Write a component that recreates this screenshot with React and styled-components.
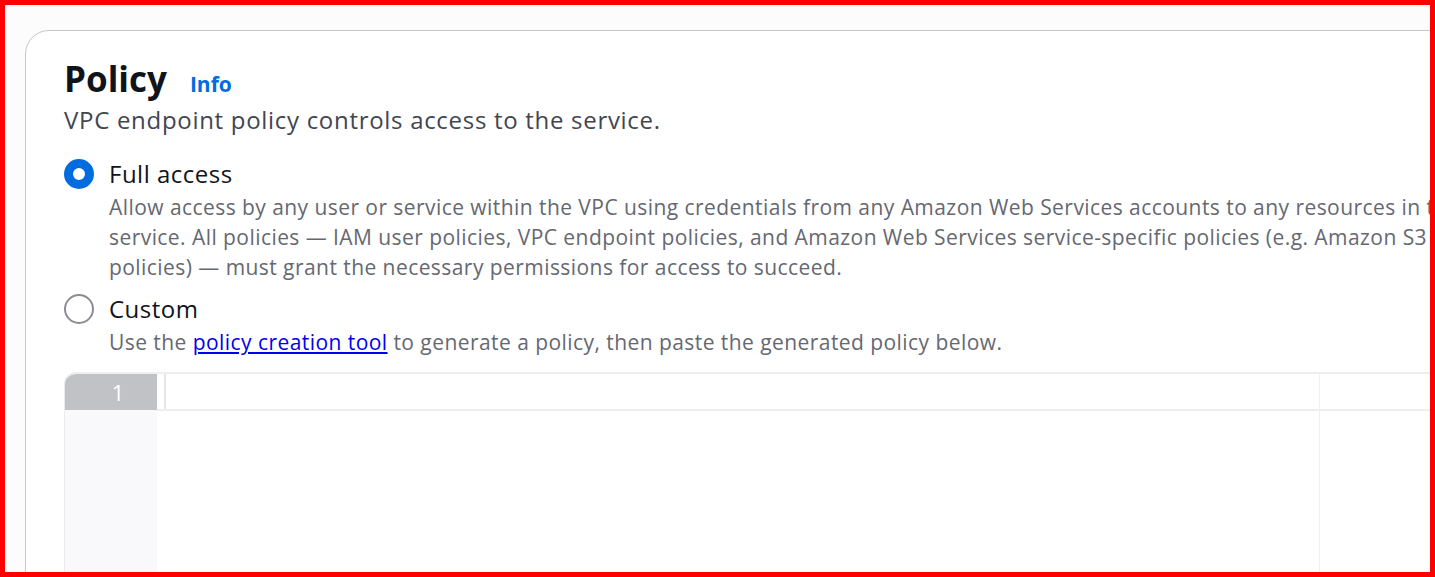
import React from "react";
import styled, { createGlobalStyle } from "styled-components";

const Global = createGlobalStyle`
  html, body { margin: 0; padding: 0; }
  body { font-family: "Open Sans", "Noto Sans", Arial, sans-serif; }
  * { box-sizing: border-box; }
`;

const Frame = styled.div`
  width: 100vw;
  height: 100vh;
  border: 5px solid #ff0000;
  background: #fcfcfc;
  overflow: hidden;
  padding: 25px 0 0 20px;
`;

const Card = styled.section`
  width: 1760px;
  min-height: 700px;
  background: #ffffff;
  border: 1px solid #c6c6cd;
  border-radius: 24px;
  padding: 23px 38px 0 38px;
`;

const HeaderRow = styled.div`
  display: flex;
  align-items: baseline;
  gap: 23px;
`;

const Title = styled.h2`
  margin: 0;
  font-size: 35px;
  line-height: 50px;
  font-weight: 700;
  color: #0f141a;
`;

const InfoLink = styled.a`
  font-size: 21px;
  font-weight: 700;
  color: #006ce0;
  text-decoration: none;
`;

const Lead = styled.p`
  margin: 0 0 20px 0;
  font-size: 24px;
  line-height: 32px;
  letter-spacing: 0.7px;
  color: #424650;
`;

const Option = styled.label`
  display: grid;
  grid-template-columns: 30px 1fr;
  column-gap: 15px;
  align-items: start;
  margin-bottom: 9px;
`;

const Radio = styled.span`
  width: 30px;
  height: 30px;
  margin-top: 3px;
  border-radius: 50%;
  border: ${(p) => (p.$checked ? "9px solid #006ce0" : "2px solid #8c8c94")};
  background: #ffffff;
`;

const OptionText = styled.div`
  display: flex;
  flex-direction: column;
  max-width: 1590px;
`;

const OptionLabel = styled.span`
  font-size: 24px;
  line-height: 36px;
  letter-spacing: 0.5px;
  color: #0f141a;
`;

const OptionDesc = styled.span`
  font-size: 21px;
  line-height: 30px;
  letter-spacing: 0.44px;
  color: #656871;
`;

const PlainLink = styled.a`
  color: #0000ee;
  text-decoration: underline;
`;

const Editor = styled.div`
  margin-top: 15px;
  position: relative;
  display: grid;
  grid-template-columns: 92px 1fr;
  border-top: 2px solid #eeeeee;
  border-left: 1px solid #e9ebed;
  border-top-left-radius: 12px;
  overflow: hidden;
  height: 260px;
`;

const Gutter = styled.div`
  background: #f9f9fb;
`;

const GutterCell = styled.div`
  height: 36px;
  background: ${(p) => (p.$active ? "#c1c2c6" : "transparent")};
  color: #ffffff;
  font-size: 22px;
  line-height: 36px;
  text-align: center;
  padding-left: 14px;
`;

const Content = styled.div`
  position: relative;
  background: #ffffff;
`;

const ActiveLine = styled.div`
  height: 37px;
  border-bottom: 2px solid #eeeeee;
  padding-left: 7px;
`;

const Cursor = styled.div`
  width: 2px;
  height: 100%;
  background: #e6e6e6;
`;

const PrintMargin = styled.div`
  position: absolute;
  top: 0;
  bottom: 0;
  left: 1162px;
  width: 1px;
  background: #efefef;
`;

export default function App() {
  return (
    <>
      <Global />
      <Frame>
        <Card>
          <HeaderRow>
            <Title>Policy</Title>
            <InfoLink href="#">Info</InfoLink>
          </HeaderRow>
          <Lead>VPC endpoint policy controls access to the service.</Lead>
          <Option>
            <Radio $checked />
            <OptionText>
              <OptionLabel>Full access</OptionLabel>
              <OptionDesc>
                Allow access by any user or service within the VPC using credentials from any Amazon Web Services
                accounts to any resources in this Amazon Web Services service. All policies — IAM user policies, VPC
                endpoint policies, and Amazon Web Services service-specific policies (e.g. Amazon S3 bucket policies,
                S3 ACL policies) — must grant the necessary permissions for access to succeed.
              </OptionDesc>
            </OptionText>
          </Option>
          <Option>
            <Radio />
            <OptionText>
              <OptionLabel>Custom</OptionLabel>
              <OptionDesc>
                Use the <PlainLink href="#">policy creation tool</PlainLink> to generate a policy, then paste the
                generated policy below.
              </OptionDesc>
            </OptionText>
          </Option>
          <Editor>
            <Gutter>
              <GutterCell $active>1</GutterCell>
            </Gutter>
            <Content>
              <ActiveLine>
                <Cursor />
              </ActiveLine>
              <PrintMargin />
            </Content>
          </Editor>
        </Card>
      </Frame>
    </>
  );
}
